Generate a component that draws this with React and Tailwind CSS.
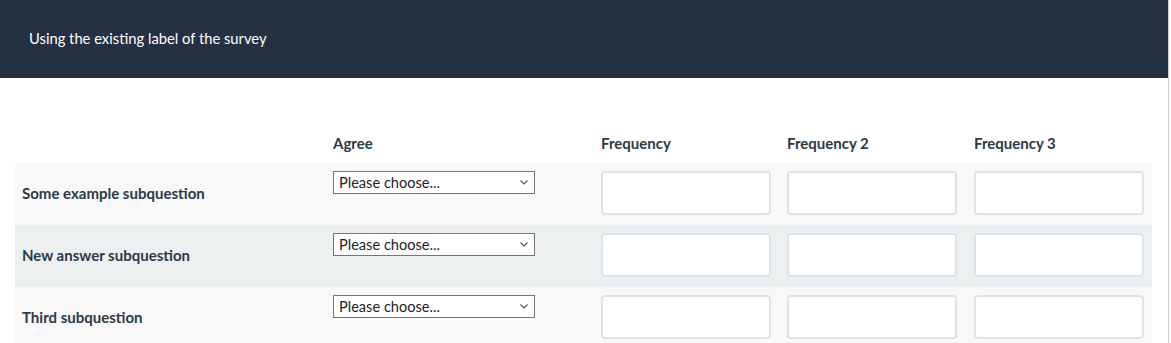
import React from 'react';

const rows = [
  { label: 'Some example subquestion', bg: 'bg-[#f8f8f8]' },
  { label: 'New answer subquestion', bg: 'bg-[#ecf0f1]' },
  { label: 'Third subquestion', bg: 'bg-[#f8f8f8]' },
];

const freqCols = ['Frequency', 'Frequency 2', 'Frequency 3'];

const Chevron = () => (
  <svg className="absolute right-[7px] top-[9px] w-[8px] h-[5px]" viewBox="0 0 8 5" fill="none">
    <path d="M0.5 0.5L4 4L7.5 0.5" stroke="#555" strokeWidth="1.2" />
  </svg>
);

const ChooseSelect = () => (
  <div className="relative w-[202px] h-[23px]">
    <select
      defaultValue=""
      className="appearance-none block w-full h-full bg-white border border-[#767676] pl-[5px] text-[14.6px] leading-[19px] text-[#1f1f1f] outline-none"
    >
      <option value="">Please choose...</option>
      <option value="1">Yes</option>
      <option value="2">No</option>
    </select>
    <Chevron />
  </div>
);

const NumberInput = () => (
  <input
    type="text"
    className="block w-[170px] h-[44px] bg-white border-2 border-[#dbe4ec] rounded-[4px]"
  />
);

export default function App() {
  return (
    <div className="w-[1169px] h-[343px] overflow-hidden border-r border-[#d4d4d4] bg-white font-['Lato','Liberation_Sans',sans-serif]">
      <div className="h-[78px] bg-[#243142] pl-[29px] flex items-center">
        <span className="text-white text-[14.75px] leading-[20px] -mt-[2px]">Using the existing label of the survey</span>
      </div>

      <div className="mt-[49px] pl-[15px]">
        <table className="border-collapse table-fixed w-[1137px]">
          <colgroup>
            <col className="w-[310px]" />
            <col className="w-[268px]" />
            <col className="w-[186px]" />
            <col className="w-[187px]" />
            <col className="w-[186px]" />
          </colgroup>
          <thead>
            <tr className="h-[36px]">
              <th />
              <th className="text-left align-top pt-[6px] px-[8px] text-[15px] leading-[20px] font-bold text-[#2c3946]">Agree</th>
              {freqCols.map((c) => (
                <th key={c} className="text-left align-top pt-[6px] px-[8px] text-[15px] leading-[20px] font-bold text-[#2c3946]">
                  {c}
                </th>
              ))}
            </tr>
          </thead>
          <tbody>
            {rows.map((r) => (
              <tr key={r.label} className={`h-[62px] ${r.bg}`}>
                <td className="align-middle pl-[7px] pb-[2px] text-[15px] leading-[20px] font-bold text-[#2c3946]">{r.label}</td>
                <td className="align-top pt-[8px] px-[8px]">
                  <ChooseSelect />
                </td>
                {freqCols.map((c) => (
                  <td key={c} className="align-top pt-[8px] px-[8px]">
                    <NumberInput />
                  </td>
                ))}
              </tr>
            ))}
          </tbody>
        </table>
      </div>
    </div>
  );
}
